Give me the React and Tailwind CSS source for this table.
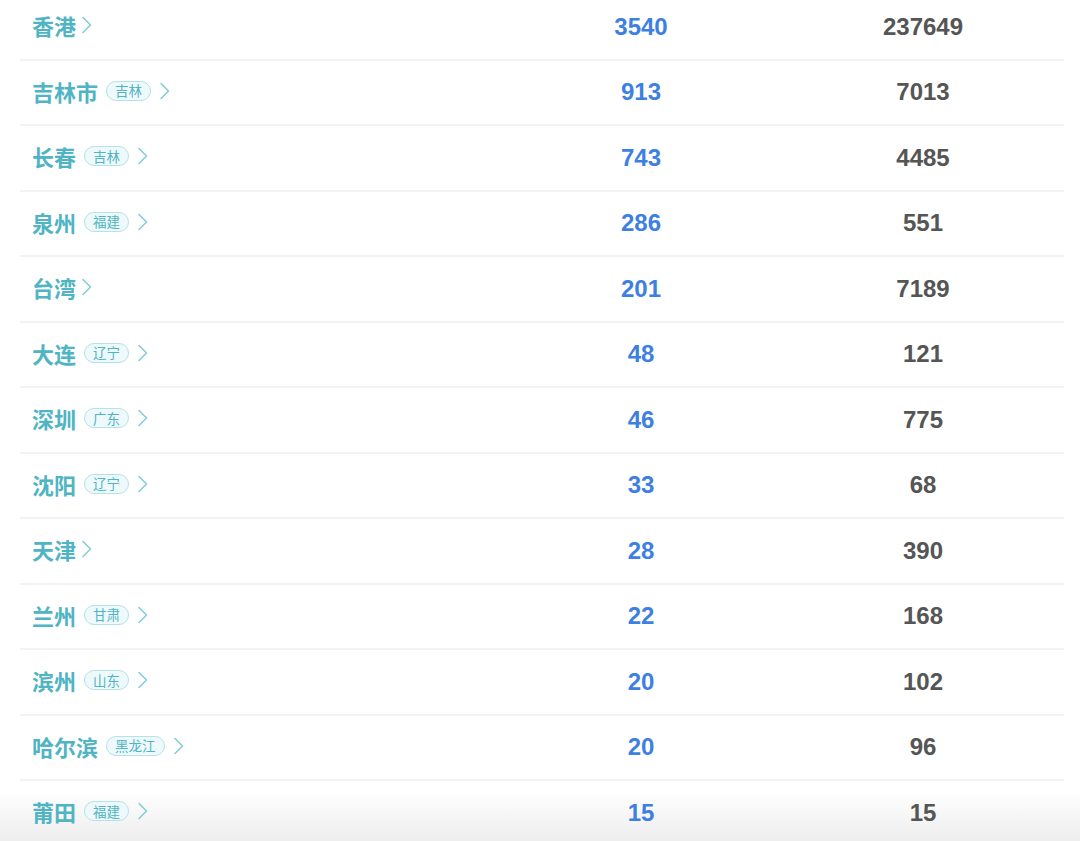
import React from 'react'

const rows = [
  { name: '香港', count: 3540, total: 237649 },
  { name: '吉林市', tag: '吉林', count: 913, total: 7013 },
  { name: '长春', tag: '吉林', count: 743, total: 4485 },
  { name: '泉州', tag: '福建', count: 286, total: 551 },
  { name: '台湾', count: 201, total: 7189 },
  { name: '大连', tag: '辽宁', count: 48, total: 121 },
  { name: '深圳', tag: '广东', count: 46, total: 775 },
  { name: '沈阳', tag: '辽宁', count: 33, total: 68 },
  { name: '天津', count: 28, total: 390 },
  { name: '兰州', tag: '甘肃', count: 22, total: 168 },
  { name: '滨州', tag: '山东', count: 20, total: 102 },
  { name: '哈尔滨', tag: '黑龙江', count: 20, total: 96 },
  { name: '莆田', tag: '福建', count: 15, total: 15 },
]

const cjk = { fontFamily: '"Noto Sans CJK SC", "Noto Sans", sans-serif' }
const num = { fontFamily: '"Liberation Sans", Arial, sans-serif' }

function Chevron() {
  return (
    <svg width="11" height="18" viewBox="0 0 11 18" fill="none" className="shrink-0">
      <path d="M2 1.5l7.5 7.5-7.5 7.5" stroke="#80ccd6" strokeWidth="1.5" strokeLinecap="round" strokeLinejoin="round" />
    </svg>
  )
}

function Row({ row }) {
  return (
    <div className="grid grid-cols-[480px_282px_282px] h-[65.5px] border-b-2 border-[#f3f3f3] items-center">
      <div className="flex items-center pl-3 -mt-[3px]" style={cjk}>
        <span className="text-[22px] font-bold text-[#4fb4c3] leading-none">{row.name}</span>
        {row.tag ? (
          <span className="ml-2 mr-2 h-[20px] px-[8px] rounded-full border border-[#b4e2e8] bg-[#eef9fb] text-[13.5px] text-[#4fb4c3] leading-none flex items-center">
            {row.tag}
          </span>
        ) : (
          <span className="w-[5px]" />
        )}
        <Chevron />
      </div>
      <div className="text-center text-[24px] font-bold text-[#3e7fe2] leading-none" style={num}>
        {row.count}
      </div>
      <div className="text-center text-[24px] font-bold text-[#555555] leading-none" style={num}>
        {row.total}
      </div>
    </div>
  )
}

export default function App() {
  return (
    <div className="w-[1080px] h-[841px] overflow-hidden bg-[linear-gradient(to_bottom,#ffffff_94%,#ededed_100%)]">
      <div className="-mt-[5px] ml-5 w-[1044px]">
        {rows.map((r) => (
          <Row key={r.name} row={r} />
        ))}
      </div>
    </div>
  )
}
